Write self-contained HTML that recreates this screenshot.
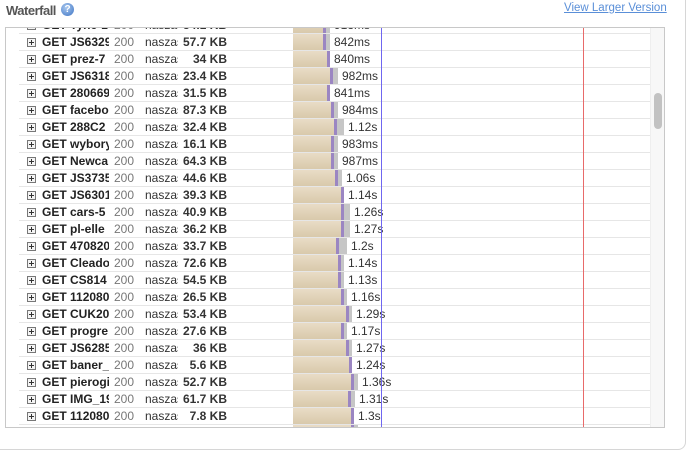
<!DOCTYPE html>
<html><head><meta charset="utf-8"><style>
*{margin:0;padding:0;box-sizing:border-box}
body{width:687px;height:452px;background:#fff;font-family:"Liberation Sans",sans-serif;position:relative;overflow:hidden}
.outer{position:absolute;left:-10px;top:-10px;width:696px;height:460px;border:1px solid #d6d6d6;border-radius:8px}
.title{position:absolute;left:6px;top:3px;font-size:13px;font-weight:bold;color:#555;letter-spacing:-0.5px}
.help{position:absolute;left:61px;top:3px;width:13px;height:13px;border-radius:50%;background:radial-gradient(circle at 40% 35%,#a9c8ef,#3d74c4);color:#fff;font-size:10px;font-weight:bold;text-align:center;line-height:13px}
.link{position:absolute;left:564px;top:2px;font-size:11.5px;color:#5a8fd8;text-decoration:underline}
.inner{position:absolute;left:5px;top:27px;width:660px;height:401px;border:1px solid #c8c8c8;overflow:hidden;background:#fff}
.row{position:absolute;left:13px;width:631px;height:17px;border-bottom:1px solid #e6e6e6;font-size:12px;line-height:16px}
.exp{position:absolute;left:8px;top:4px;width:9px;height:9px;border:1px solid #777;background:#f4f4f4}
.exp:before{content:"";position:absolute;left:1px;top:3px;width:5px;height:1px;background:#333}
.exp:after{content:"";position:absolute;left:3px;top:1px;width:1px;height:5px;background:#333}
.nm{position:absolute;left:23px;width:67px;overflow:hidden;white-space:nowrap;font-weight:bold;color:#222}
.st{position:absolute;left:95px;color:#777}
.ho{position:absolute;left:126px;width:33px;overflow:hidden;white-space:nowrap;color:#333}
.sz{position:absolute;left:150px;width:58px;text-align:right;font-weight:bold;color:#333}
.bar{position:absolute;top:0;height:16px}
.tan{background:linear-gradient(#e9dcc6,#d9c9ab)}
.pur{background:#9b86c2;width:3px}
.gry{background:#c6c6c6}
.tm{position:absolute;color:#333}
.vl{position:absolute;top:0;height:401px;width:1px}
.sb{position:absolute;left:644px;top:0;width:15px;height:401px;background:#f7f7f7;border-left:1px solid #eee}
.th{position:absolute;left:3px;top:65px;width:8px;height:36px;border-radius:4px;background:#c2c2c2}
</style></head><body>
<div class="outer"></div>
<div class="title">Waterfall</div><div class="help">?</div>
<a class="link">View Larger Version</a>
<div class="inner">
<div id="rows"></div>
<div class="vl" style="left:375px;background:#6f66f0"></div>
<div class="vl" style="left:577px;background:#e86a6a"></div>
<div class="sb"><div class="th"></div></div>
</div>
<script>
var d=[["GET Tyne-1","54.1 KB","913ms",333,4],
["GET JS6329","57.7 KB","842ms",333,4],
["GET prez-7","34 KB","840ms",333,0],
["GET JS6318","23.4 KB","982ms",341,5],
["GET 280669","31.5 KB","841ms",333,0],
["GET facebo","87.3 KB","984ms",341,4],
["GET 288C2","32.4 KB","1.12s",347,7],
["GET wybory","16.1 KB","983ms",341,4],
["GET Newca","64.3 KB","987ms",341,4],
["GET JS3735","44.6 KB","1.06s",345,4],
["GET JS6301","39.3 KB","1.14s",347,0],
["GET cars-5","40.9 KB","1.26s",353,6],
["GET pl-elle","36.2 KB","1.27s",353,6],
["GET 470820","33.7 KB","1.2s",350,8],
["GET Cleado","72.6 KB","1.14s",347,3],
["GET CS814","54.5 KB","1.13s",347,3],
["GET 112080","26.5 KB","1.16s",350,3],
["GET CUK20","53.4 KB","1.29s",355,3],
["GET progre","27.6 KB","1.17s",350,3],
["GET JS6285","36 KB","1.27s",355,3],
["GET baner_","5.6 KB","1.24s",355,0],
["GET pierogi","52.7 KB","1.36s",361,4],
["GET IMG_19","61.7 KB","1.31s",358,4],
["GET 112080","7.8 KB","1.3s",357,0],
["GET 112080","7.8 KB","",361,4]];
var h="";
d.forEach(function(r,i){
 var top=-11+17*i;var tx=r[3]-18,g=r[4],te=tx-4-g-3;
 h+='<div class="row" style="top:'+top+'px"><div class="exp"></div><span class="nm">'+r[0]+'</span><span class="st">200</span><span class="ho">naszaszkola</span><span class="sz">'+r[1]+'</span>'+
 '<div class="bar tan" style="left:274px;width:'+(te-274)+'px"></div><div class="bar pur" style="left:'+te+'px"></div><div class="bar gry" style="left:'+(te+3)+'px;width:'+g+'px"></div><span class="tm" style="left:'+tx+'px">'+r[2]+'</span></div>';
});
document.getElementById("rows").innerHTML=h;
</script>
</body></html>
